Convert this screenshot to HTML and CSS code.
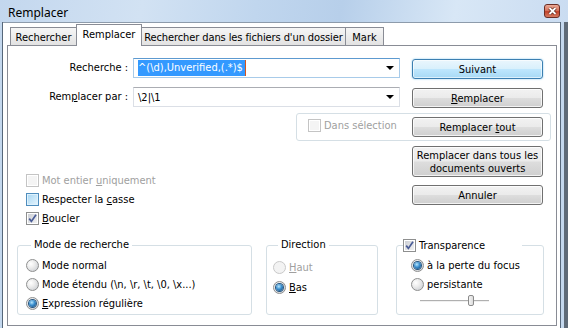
FILE: index.html
```html
<!DOCTYPE html>
<html lang="fr">
<head>
  <meta charset="UTF-8" />
  <title>Remplacer</title>
  <link rel="stylesheet" href="styles.css">
</head>
<body>
  <div class="window">
    <div class="titlebar">
      <span class="title">Remplacer</span>
      <span class="close">
        <svg width="9" height="8" viewBox="0 0 9 8">
          <path d="M1.5 1 L7.5 7 M7.5 1 L1.5 7" stroke="#5a2318" stroke-width="3.2" />
          <path d="M1.5 1 L7.5 7 M7.5 1 L1.5 7" stroke="#fff" stroke-width="1.8" />
        </svg>
      </span>
    </div>

    <div class="body">
      <div class="frame-left"></div>

      <div class="client">
        <div class="tabs">
          <div class="tab tab-find">Rechercher</div>
          <div class="tab tab-replace active">Remplacer</div>
          <div class="tab tab-files">Rechercher dans les fichiers d'un dossier</div>
          <div class="tab tab-mark">Mark</div>
        </div>

        <div class="panel">
          <div class="row row-first">
            <label class="field-label">Recherche :</label>
            <div class="combo focused">
              <span class="selected-text">^(\d),Unverified,(.*)$</span><span class="caret"></span>
              <span class="arrow"></span>
            </div>
            <button class="btn default">Suivant</button>
          </div>

          <div class="row row-second">
            <label class="field-label">Rem<u>p</u>lacer par :</label>
            <div class="combo">
              <span>\2|\1</span>
              <span class="arrow"></span>
            </div>
            <button class="btn"><u>R</u>emplacer</button>
          </div>

          <div class="sel-box">
            <div class="check disabled sel-check">
              <span class="cb"></span>
              <span>Dans sélection</span>
            </div>
            <button class="btn">Remplacer <u>t</u>out</button>
          </div>

          <div class="middle">
            <div class="options">
              <div class="check disabled">
                <span class="cb"></span>
                <span>Mot entier <u>u</u>niquement</span>
              </div>
              <div class="check">
                <span class="cb hover"></span>
                <span>Respecter la <u>c</u>asse</span>
              </div>
              <div class="check">
                <span class="cb checked">
                  <svg width="9" height="9" viewBox="0 0 9 9"><path d="M1.2 4.6 L3.4 7.4 L8 0.8" fill="none" stroke="#4a5c96" stroke-width="1.7" /></svg>
                </span>
                <span><u>B</u>oucler</span>
              </div>
            </div>

            <div class="btn-col">
              <button class="btn tall">Remplacer dans tous les<br>documents ouverts</button>
              <button class="btn">Annuler</button>
            </div>
          </div>

          <div class="groups">
            <fieldset class="group group-mode">
              <legend>Mode de recherche</legend>
              <div class="radio"><span class="rb"></span><span>Mode normal</span></div>
              <div class="radio"><span class="rb"></span><span>Mode étendu (\n, \r, \t, \0, \x...)</span></div>
              <div class="radio"><span class="rb on"></span><span><u>E</u>xpression régulière</span></div>
            </fieldset>

            <fieldset class="group group-dir">
              <legend>Direction</legend>
              <div class="radio disabled"><span class="rb"></span><span><u>H</u>aut</span></div>
              <div class="radio"><span class="rb on"></span><span><u>B</u>as</span></div>
            </fieldset>

            <fieldset class="group group-trans">
              <legend>
                <span class="check">
                  <span class="cb checked">
                    <svg width="9" height="9" viewBox="0 0 9 9"><path d="M1.2 4.6 L3.4 7.4 L8 0.8" fill="none" stroke="#4a5c96" stroke-width="1.7" /></svg>
                  </span>
                  <span>Transparence</span>
                </span>
              </legend>
              <div class="radio"><span class="rb on"></span><span>à la perte du focus</span></div>
              <div class="radio"><span class="rb"></span><span>persistante</span></div>
              <div class="slider">
                <span class="track"></span>
                <span class="thumb"></span>
              </div>
            </fieldset>
          </div>
        </div>
      </div>

      <div class="frame-right"></div>
    </div>
  </div>
</body>
</html>
```

FILE: styles.css
```css
* {
  box-sizing: border-box;
}

body {
  margin: 0;
  font-family: "DejaVu Sans Condensed", "Liberation Sans", sans-serif;
  font-size: 11px;
  color: #000;
  background: #c4d8ee;
}

u {
  text-decoration: underline;
  text-underline-offset: 1px;
}

.window {
  width: 568px;
  height: 328px;
  display: flex;
  flex-direction: column;
  overflow: hidden;
}

/* title bar */
.titlebar {
  height: 22px;
  flex-shrink: 0;
  display: flex;
  align-items: center;
  padding: 2px 0 0 8px;
  background: linear-gradient(100deg, #c3d7ee 0%, #d2e2f3 25%, #c0d6ee 45%, #b7cfea 60%, #d8e7f6 80%, #cadcf1 100%);
}

.title {
  font-family: "Noto Sans", "Liberation Sans", sans-serif;
  font-size: 12px;
  color: #000;
}

.close {
  margin-left: auto;
  margin-right: 8px;
  margin-top: -3px;
  width: 16px;
  height: 14px;
  border: 1px solid #6b2e25;
  border-radius: 3px;
  background: linear-gradient(#eaa996 0%, #d6765f 45%, #c2432b 55%, #d47a60 100%);
  display: flex;
  align-items: center;
  justify-content: center;
}

.body {
  flex: 1;
  display: flex;
}

.frame-left {
  width: 3px;
  background: #c4d8ee;
  border-right: 1px solid #56677a;
}

.frame-right {
  width: 8px;
  background: #c4d8ee;
  border-left: 1px solid #56677a;
  border-right: 4px solid #5f6b78;
}

.client {
  flex: 1;
  background: #fff;
  border-top: 1px solid #8d9bab;
  padding: 0 3px 2px 4px;
  display: flex;
  flex-direction: column;
}

/* tabs */
.tabs {
  height: 22px;
  display: flex;
  align-items: flex-end;
  padding-left: 3px;
}

.tab {
  height: 18px;
  border: 1px solid #898c95;
  border-bottom: none;
  background: linear-gradient(#f6f6f6, #e2e2e2);
  display: flex;
  align-items: center;
  justify-content: center;
  white-space: nowrap;
  padding-top: 1px;
}

.tab + .tab {
  margin-left: -1px;
}

.tab-find { width: 67px; }
.tab-replace { width: 66px; }
.tab-files {
  width: 205px;
  letter-spacing: -0.1px;
}
.tab-mark { width: 39px; }

.tab.active {
  height: 22px;
  margin-bottom: -1px;
  background: #fff;
  position: relative;
  z-index: 1;
  padding-top: 0;
  padding-bottom: 3px;
}

.panel {
  height: 281px;
  border: 1px solid #898c95;
  background: #fff;
  display: flex;
  flex-direction: column;
}

/* combo rows */
.row {
  display: flex;
  align-items: flex-start;
  height: 21px;
}

.row-first { margin-top: 12px; }
.row-second { margin-top: 8px; }

.field-label {
  width: 120px;
  margin-right: 5px;
  text-align: right;
  line-height: 20px;
}

.combo {
  width: 267px;
  height: 20px;
  position: relative;
  display: flex;
  align-items: center;
  padding-left: 4px;
  border: 1px solid #dbdfe6;
  border-top-color: #abadb3;
}

.combo.focused {
  border-color: #a8cbe9;
  border-top-color: #5d9ad0;
}

.selected-text {
  background: #3399ff;
  color: #fff;
  line-height: 16px;
  padding-right: 2px;
}

.caret {
  width: 1px;
  height: 16px;
  background: #d8541c;
}

.arrow {
  position: absolute;
  right: 5px;
  top: 7px;
  width: 0;
  height: 0;
  border-left: 4px solid transparent;
  border-right: 4px solid transparent;
  border-top: 4px solid #000;
}

/* buttons */
.btn {
  width: 131px;
  height: 20px;
  margin: 1px 0 0 12px;
  padding: 0;
  font-family: inherit;
  font-size: 11px;
  color: #000;
  border: 1px solid #707070;
  border-radius: 3px;
  background: linear-gradient(#f2f2f2 0%, #ebebeb 48%, #dddddd 52%, #cfcfcf 100%);
  box-shadow: inset 0 0 0 1px rgba(255, 255, 255, 0.75);
  line-height: 13px;
}

.btn.default {
  border-color: #3c7fb1;
  background: linear-gradient(#eaf6fd 0%, #d9f0fc 48%, #bee6fd 52%, #a7d9f5 100%);
  box-shadow: inset 0 0 0 1px rgba(255, 255, 255, 0.6), 0 0 2px #7ec4ee;
}

.btn.tall {
  height: 31px;
  margin: 0;
}

/* selection box */
.sel-box {
  margin: 5px 0 0 288px;
  width: 255px;
  height: 28px;
  border: 1px solid #d5dfe5;
  border-radius: 3px;
  display: flex;
  align-items: flex-start;
  padding: 3px 7px 0 11px;
}

.sel-box .btn {
  margin: 0 0 0 auto;
}

.sel-check {
  margin-top: 2px;
}

/* checkboxes */
.check {
  display: flex;
  align-items: flex-start;
  line-height: 13px;
  white-space: nowrap;
}

.check .cb {
  margin-right: 3px;
}

.cb {
  width: 13px;
  height: 13px;
  flex-shrink: 0;
  border: 1px solid #8e8f8f;
  background: linear-gradient(135deg, #c9ccd2, #f4f4f4);
  box-shadow: inset 0 0 0 1px #fff;
  display: inline-flex;
  align-items: center;
  justify-content: center;
}

.cb.hover {
  border-color: #4f8dbd;
  background: linear-gradient(135deg, #a6d6f3, #e7f5fd);
  box-shadow: inset 0 0 0 1px #def2fd;
}

.check.disabled {
  color: #a0a0a0;
}

.check.disabled .cb {
  border-color: #c4c4c4;
  background: #f4f4f4;
}

.middle {
  display: flex;
  align-items: flex-start;
}

.options {
  flex: 1;
  padding: 33px 0 0 18px;
}

.options .check {
  height: 19px;
}

.btn-col {
  display: flex;
  flex-direction: column;
  gap: 8px;
  padding-top: 5px;
  margin-right: 13px;
}

.btn-col .btn {
  margin: 0;
}

/* group boxes */
.groups {
  display: flex;
  margin-top: 7px;
  padding-left: 9px;
}

.group {
  margin: 0;
  padding: 0;
  height: 77px;
  border: 1px solid #d5dfe5;
  border-radius: 3px;
  min-width: 0;
}

.group legend {
  padding: 0 3px;
  margin-left: 5px;
  line-height: 14px;
  height: 14px;
}

.group-mode {
  width: 235px;
  padding: 4px 0 0 8px;
}

.group-dir {
  width: 112px;
  margin-left: 14px;
  padding: 5px 0 0 6px;
}

.group-dir .radio {
  height: 20px;
}

.group-trans {
  width: 148px;
  margin-left: 18px;
  padding: 4px 0 0 14px;
}

.group-trans legend {
  margin-left: -8px;
  padding: 0;
  width: 119px;
  background: #fff;
}

.group-trans legend .check {
  align-items: center;
  height: 14px;
}

.radio {
  height: 19px;
  display: flex;
  align-items: center;
  white-space: nowrap;
}

.radio.disabled {
  color: #a0a0a0;
}

.rb {
  width: 13px;
  height: 13px;
  margin-right: 3px;
  flex-shrink: 0;
  border-radius: 50%;
  border: 1px solid #8e8f8f;
  background: radial-gradient(circle at 35% 35%, #ffffff 0%, #eeeeee 35%, #cdd0d4 85%);
  display: inline-flex;
  align-items: center;
  justify-content: center;
}

.rb.on::after {
  content: "";
  width: 7px;
  height: 7px;
  border-radius: 50%;
  background: radial-gradient(circle at 40% 35%, #b9e7fd 0%, #3a8fcf 45%, #0f3f70 100%);
  box-shadow: 0 0 0 1px #25557f;
}

.radio.disabled .rb {
  border-color: #c9c9c9;
  background: #f3f3f3;
}

.slider {
  position: relative;
  height: 12px;
  margin: 1px 0 0 9px;
  width: 69px;
}

.track {
  position: absolute;
  left: 0;
  right: 0;
  top: 5px;
  height: 2px;
  border-top: 1px solid #b0b0b0;
  border-bottom: 1px solid #f0f0f0;
  background: #d6d6d6;
}

.thumb {
  position: absolute;
  left: 48px;
  top: 0;
  width: 6px;
  height: 11px;
  border: 1px solid #8a8a8a;
  border-radius: 2px;
  background: linear-gradient(90deg, #f4f4f4, #dcdcdc);
}
```
